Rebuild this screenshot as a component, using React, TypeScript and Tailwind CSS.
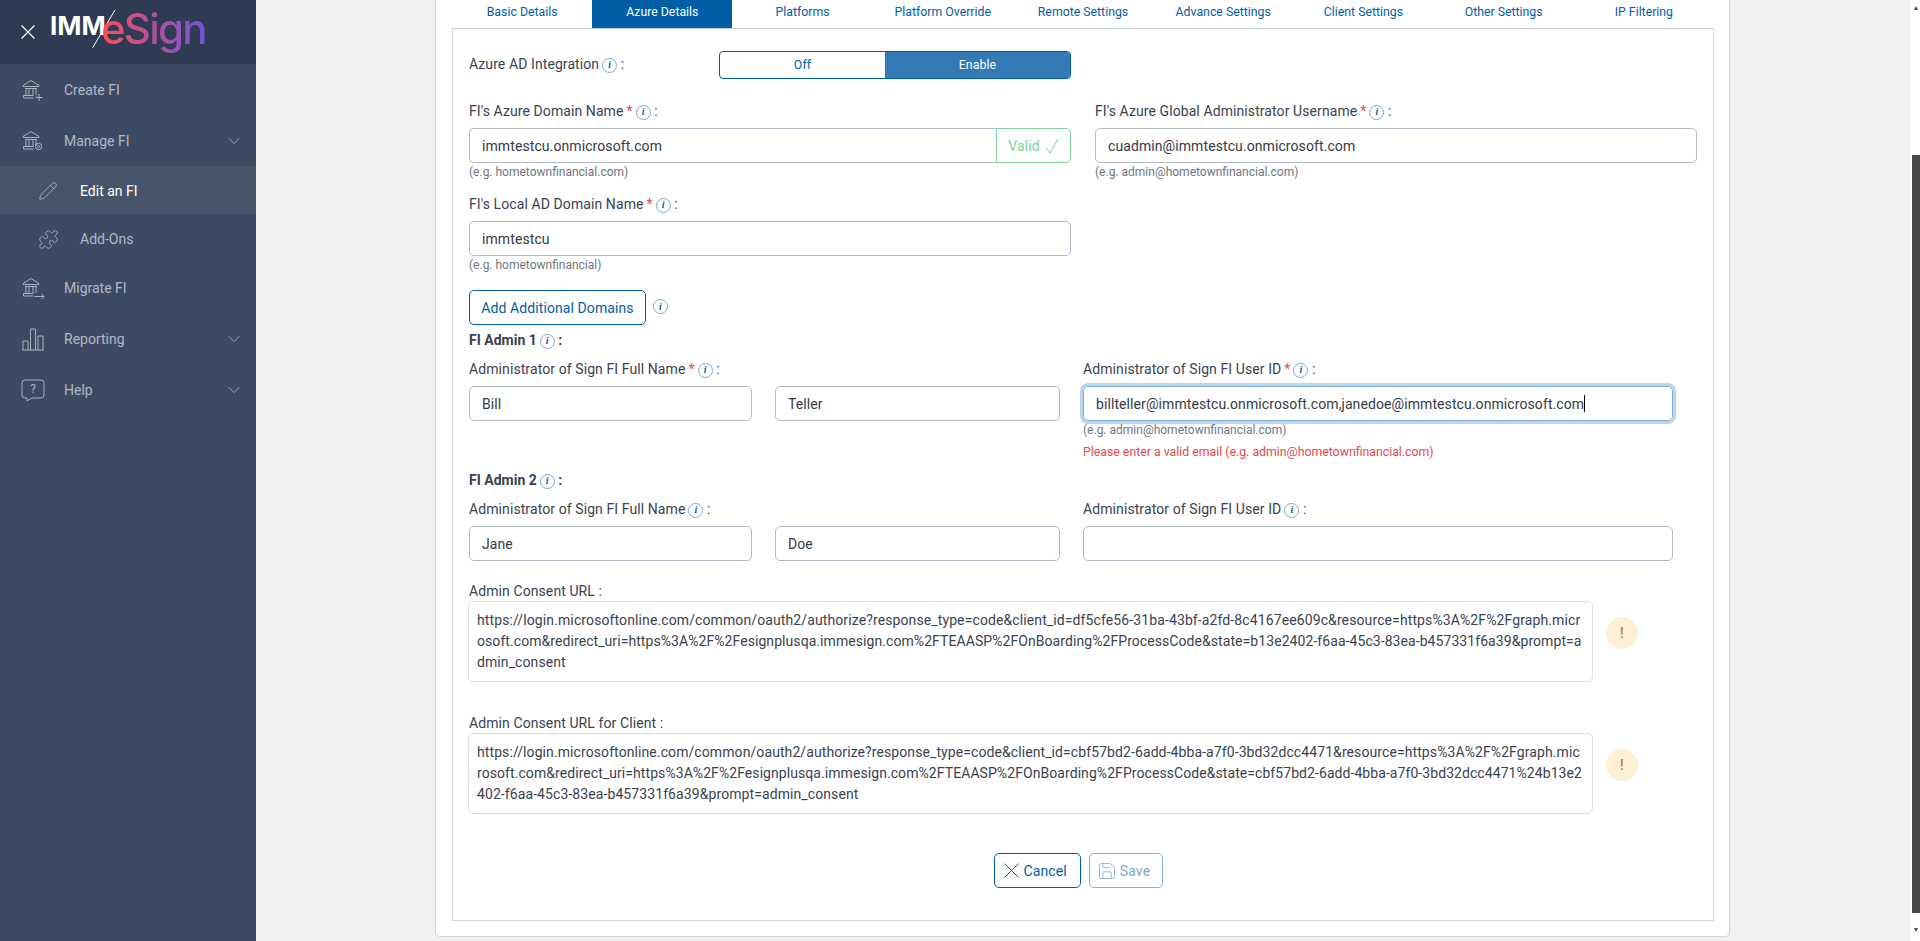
import { Pencil, Puzzle, ChevronDown, Save } from "lucide-react";
import type { ReactNode } from "react";

const Bank = ({ children }: { children?: ReactNode }) => (
  <svg width="24" height="24" viewBox="0 0 24 24" fill="none" stroke="#a9b2c0" strokeWidth="1" className="shrink-0">
    <path d="M2 7.500 10 2.500l8 5v1H2z" />
    <path d="M4 10.500h12M5 11v6M8 11v6M12 11v6M15 11v6M2.500 17.500h10M2.500 17.500v2.500h10" />
    {children}
  </svg>
);

const NavItem = ({ icon, label, chevron, sub, active }: { icon: ReactNode; label: string; chevron?: boolean; sub?: boolean; active?: boolean }) => (
  <div className={`flex items-center ${sub ? "h-12 pl-[38px] pt-[2px]" : "h-[51px] pl-[21px]"} pr-[12px] ${active ? "bg-[#465469] text-white" : "text-[#b1b9c6]"}`}>
    <span className={`${sub ? "w-[42px]" : "w-[43px]"} flex items-center`}>{icon}</span>
    <span className="flex-1 text-sm">{label}</span>
    {chevron && <ChevronDown size={20} strokeWidth={1} className="text-[#b1b9c6]" />}
  </div>
);

const Info = ({ cls = "ml-[3px]" }: { cls?: string }) => (
  <span className={`inline-flex w-[15px] h-[15px] -translate-y-[1px] items-center justify-center rounded-full border border-[#7ea9cf] text-[10px] leading-none italic font-bold text-[#005ea6] [font-family:'Liberation_Serif',serif] ${cls}`}>i</span>
);
const Req = () => <span className="text-[#e5484d] ml-[3px]">*</span>;

const Label = ({ text, req, cls = "" }: { text: string; req?: boolean; cls?: string }) => (
  <div className={`h-[17px] leading-[17px] text-sm text-[#3b4250] whitespace-nowrap ${cls}`}>
    {text}
    {req && <Req />}
    <Info /> :
  </div>
);
const Input = ({ value = "", cls = "" }: { value?: string; cls?: string }) => (
  <input readOnly value={value} className={`block w-full h-[35px] rounded-[5px] border border-[#b4bac5] bg-white px-[12px] text-sm text-[#333a46] outline-none ${cls}`} />
);
const Hint = ({ children }: { children: ReactNode }) => (
  <div className="h-[18px] leading-[18px] text-xs tracking-normal text-[#6f7682] whitespace-nowrap">{children}</div>
);
const Url = ({ label, lines, cls }: { label: string; lines: ReactNode; cls: string }) => (
  <div className={cls}>
    <div className="h-[16px] leading-[16px] text-sm text-[#3b4250]">{label} :</div>
    <div className="flex items-start mt-[2px] -ml-px">
      <div className="w-[1125px] h-[81px] rounded-[5px] border border-[#dcdfe4] px-[8px] py-[8px] text-sm leading-[21px] text-[#3b4250] whitespace-nowrap">{lines}</div>
      <span className="ml-[13px] mt-[16px] w-[32px] h-[32px] rounded-full bg-[#fdf0d5] flex items-center justify-center text-sm text-[#c77c11] font-medium">!</span>
    </div>
  </div>
);

const tabs = ["Basic Details", "Azure Details", "Platforms", "Platform Override", "Remote Settings", "Advance Settings", "Client Settings", "Other Settings", "IP Filtering"];

export default function App() {
  return (
    <div className="h-screen w-full overflow-hidden flex bg-[#f1f1f1] [font-family:Roboto,sans-serif]">
      <aside className="w-[256px] shrink-0 bg-[#3c4b63]">
        <div className="h-[64px] bg-[#2f3b52] flex items-center pl-[21px]">
          <svg width="14" height="14" viewBox="0 0 14 14" fill="none" stroke="#fff" strokeWidth="1.200" className="shrink-0"><path d="M.5.500l13 13M13.500.500l-13 13" /></svg>
          <div className="relative ml-[15px] w-[160px] h-[64px]">
            <span className="absolute left-0 top-[11px] text-[26px] leading-[30px] font-bold text-white [font-family:Inter,sans-serif]">IMM</span>
            <svg width="30" height="44" viewBox="0 0 30 44" className="absolute left-[40px] top-[8px]" stroke="#fff" strokeWidth="1" fill="none">
              <path d="M25 2 2.700 39.700" />
            </svg>
            <span className="absolute left-[51px] top-[2px] text-[42px] leading-[54px] font-medium tracking-[-1.800px] [font-family:Inter,sans-serif] bg-gradient-to-r from-[#ff4a4f] via-[#b04f9c] to-[#6f55d8] bg-clip-text text-transparent">eSign</span>
          </div>
        </div>
        <NavItem label="Create FI" icon={<Bank><path d="M18 16v7M14.500 19.500h7" /></Bank>} />
        <NavItem label="Manage FI" chevron icon={<Bank><circle cx="17.500" cy="17.500" r="3.200" /><circle cx="17.500" cy="17.500" r="1" /></Bank>} />
        <NavItem sub active label="Edit an FI" icon={<Pencil size={20} strokeWidth={1} className="text-[#b1b9c6]" />} />
        <NavItem sub label="Add-Ons" icon={<Puzzle size={21} strokeWidth={1} className="text-[#a9b2c0]" />} />
        <NavItem label="Migrate FI" icon={<Bank><path d="M13.500 20.500H23M20.500 18l2.500 2.500-2.500 2.500" /></Bank>} />
        <NavItem label="Reporting" chevron icon={
          <svg width="24" height="24" viewBox="0 0 24 24" fill="none" stroke="#a9b2c0" strokeWidth="1"><path d="M1 23h22M2 23v-9h5v9M9.500 23V2h5v21M17 23V9h5v14" /></svg>
        } />
        <NavItem label="Help" chevron icon={
          <svg width="24" height="24" viewBox="0 0 24 24" fill="none" stroke="#a9b2c0" strokeWidth="1"><path d="M4 2h16a3 3 0 0 1 3 3v12a3 3 0 0 1-3 3h-9l-5 3v-3H4a3 3 0 0 1-3-3V5a3 3 0 0 1 3-3z" /><text x="12" y="15" textAnchor="middle" fontSize="12" fill="#a9b2c0" stroke="none">?</text></svg>
        } />
      </aside>

      <main className="flex-1 pl-[179px] tracking-[0.09px]">
        <div className="w-[1295px] h-[937px] bg-white border-r border-b border-l border-[#d4d4d4] rounded-b-[5px] pl-[16px] pr-[15px]">
          <div className="flex h-[28px]">
            {tabs.map((t, i) => (
              <div key={t} className={`flex-1 text-center text-[12.300px] tracking-normal leading-[25px] ${i === 1 ? "bg-[#005ea6] text-white" : "text-[#005ea6]"}`}>{t}</div>
            ))}
          </div>
          <div className="h-[893px] border border-[#d4d4d4] border-t-[#c3c9d3] pl-[16px] pr-[16px]">
            <div className="flex items-center mt-[22px] h-[28px]">
              <div className="w-[250px] -translate-y-[1px] text-sm text-[#3b4250]">Azure AD Integration<Info /> :</div>
              <div className="flex w-[352px] h-[28px] rounded-[4px] border border-[#005ea6] overflow-hidden text-[12.300px]">
                <div className="w-[165px] flex items-center justify-center text-[#005ea6]">Off</div>
                <div className="flex-1 flex items-center justify-center bg-[#337ab7] text-white">Enable</div>
              </div>
            </div>

            <div className="grid grid-cols-[602px_602px] gap-x-[24px] mt-[24px]">
              <div>
                <Label text="FI's Azure Domain Name" req />
                <div className="flex mt-[8px]">
                  <Input value="immtestcu.onmicrosoft.com" cls="rounded-r-none border-r-0" />
                  <div className="shrink-0 w-[75px] h-[35px] rounded-r-[5px] border border-[#7fd19b] flex items-center justify-center text-sm text-[#7fd19b]">
                    Valid
                    <svg width="14" height="16" viewBox="0 0 14 16" fill="none" stroke="#7fd19b" strokeWidth="1" className="ml-[5px]"><path d="M1 9.500 5 15 13 1" /></svg>
                  </div>
                </div>
                <Hint>(e.g. hometownfinancial.com)</Hint>
              </div>
              <div>
                <Label text="FI's Azure Global Administrator Username" req />
                <Input value="cuadmin@immtestcu.onmicrosoft.com" cls="mt-[8px]" />
                <Hint>(e.g. admin@hometownfinancial.com)</Hint>
              </div>
              <div className="mt-[15px]">
                <Label text="FI's Local AD Domain Name" req />
                <Input value="immtestcu" cls="mt-[8px]" />
                <Hint>(e.g. hometownfinancial)</Hint>
              </div>
            </div>

            <div className="flex items-center mt-[16px]">
              <button className="w-[177px] h-[35px] rounded-[5px] border border-[#005ea6] text-sm text-[#005ea6]">Add Additional Domains</button>
              <Info cls="ml-[7px]" />
            </div>

            <div className="h-[17px] leading-[17px] mt-[7px] text-sm font-bold tracking-normal text-[#3b4250]">FI Admin 1<Info /> :</div>

            <div className="grid grid-cols-[282.500px_284.500px_590px] gap-x-[23.500px] mt-[12px]">
              <Label text="Administrator of Sign FI Full Name" req cls="col-span-2" />
              <Label text="Administrator of Sign FI User ID" req />
              <Input value="Bill" cls="mt-[8px]" />
              <Input value="Teller" cls="mt-[8px]" />
              <div>
                <div className="mt-[8px] h-[35px] rounded-[5px] border border-[#7fb0da] ring-[3px] ring-[#bcd5ea] px-[12px] flex items-center text-sm text-[#333a46] whitespace-nowrap">
                  billteller@immtestcu.onmicrosoft.com,janedoe@immtestcu.onmicrosoft.com<span className="inline-block w-px h-[17px] bg-black" />
                </div>
                <Hint>(e.g. admin@hometownfinancial.com)</Hint>
                <div className="h-[18px] mt-[4px] leading-[18px] text-[12.300px] tracking-normal text-[#e5484d] whitespace-nowrap">Please enter a valid email (e.g. admin@hometownfinancial.com)</div>
              </div>
            </div>

            <div className="h-[17px] leading-[17px] mt-[11px] text-sm font-bold tracking-normal text-[#3b4250]">FI Admin 2<Info /> :</div>

            <div className="grid grid-cols-[282.500px_284.500px_590px] gap-x-[23.500px] mt-[12px]">
              <Label text="Administrator of Sign FI Full Name" cls="col-span-2" />
              <Label text="Administrator of Sign FI User ID" />
              <Input value="Jane" cls="mt-[8px]" />
              <Input value="Doe" cls="mt-[8px]" />
              <Input cls="mt-[8px]" />
            </div>

            <Url cls="mt-[22px]" label="Admin Consent URL" lines={
              <>
                <div className="tracking-[0.11px]">https://login.microsoftonline.com/common/oauth2/authorize?response_type=code&amp;client_id=df5cfe56-31ba-43bf-a2fd-8c4167ee609c&amp;resource=https%3A%2F%2Fgraph.micr</div>
                <div className="tracking-[0.07px]">osoft.com&amp;redirect_uri=https%3A%2F%2Fesignplusqa.immesign.com%2FTEAASP%2FOnBoarding%2FProcessCode&amp;state=b13e2402-f6aa-45c3-83ea-b457331f6a39&amp;prompt=a</div>
                <div>dmin_consent</div>
              </>
            } />
            <Url cls="mt-[33px]" label="Admin Consent URL for Client" lines={
              <>
                <div className="tracking-[0.09px]">https://login.microsoftonline.com/common/oauth2/authorize?response_type=code&amp;client_id=cbf57bd2-6add-4bba-a7f0-3bd32dcc4471&amp;resource=https%3A%2F%2Fgraph.mic</div>
                <div className="tracking-[0.07px]">rosoft.com&amp;redirect_uri=https%3A%2F%2Fesignplusqa.immesign.com%2FTEAASP%2FOnBoarding%2FProcessCode&amp;state=cbf57bd2-6add-4bba-a7f0-3bd32dcc4471%24b13e2</div>
                <div>402-f6aa-45c3-83ea-b457331f6a39&amp;prompt=admin_consent</div>
              </>
            } />

            <div className="flex justify-center gap-[8px] mt-[39px] pr-[10px]">
              <button className="w-[87px] h-[35px] rounded-[5px] border border-[#005ea6] text-sm text-[#005ea6] flex items-center pl-[9px] gap-[5px]">
                <svg width="15" height="15" viewBox="0 0 15 15" fill="none" stroke="#005ea6" strokeWidth="1"><path d="M.5.500l14 14M14.500.500l-14 14" /></svg>
                Cancel
              </button>
              <button className="w-[74px] h-[35px] rounded-[5px] border border-[#7fb0da] text-sm text-[#7fa9cf] flex items-center justify-center gap-[3px] pr-[4px]"><Save size={20} strokeWidth={1} />Save</button>
            </div>
          </div>
        </div>
      </main>

      <div className="w-[10px] shrink-0 h-full flex flex-col bg-white">
        <div className="h-[12px] flex items-end justify-center pl-[2px] text-[7px] leading-none text-[#505050]">▲</div>
        <div className="h-[143px]" />
        <div className="h-[758px] ml-[2px] bg-[#484848]" />
        <div className="flex-1" />
        <div className="h-[14px] flex items-start justify-center pl-[2px] text-[7px] leading-none text-[#505050]">▼</div>
      </div>
    </div>
  );
}
